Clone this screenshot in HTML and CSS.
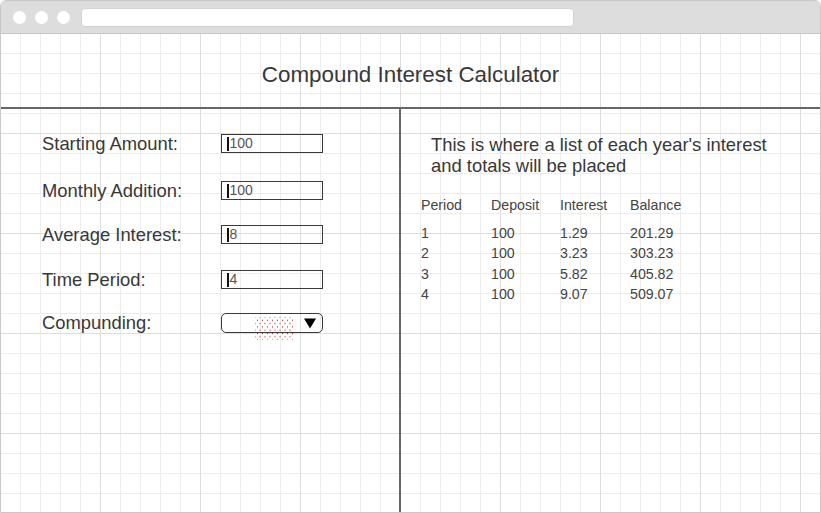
FILE: index.html
```html
<!DOCTYPE html>
<html>
<head>
<meta charset="utf-8">
<title>Compound Interest Calculator</title>
<link rel="stylesheet" href="styles.css">
</head>
<body>
<div class="window">
  <div class="chrome">
    <span class="dot"></span><span class="dot"></span><span class="dot"></span>
    <div class="address"></div>
  </div>
  <div class="canvas">
    <div class="title-bar"><h1 class="title">Compound Interest Calculator</h1></div>
    <div class="body">
      <div class="form">
        <div class="row"><span class="label">Starting Amount:</span><div class="field"><span class="caret"></span>100</div></div>
        <div class="row"><span class="label">Monthly Addition:</span><div class="field"><span class="caret"></span>100</div></div>
        <div class="row"><span class="label">Average Interest:</span><div class="field"><span class="caret"></span>8</div></div>
        <div class="row"><span class="label">Time Period:</span><div class="field"><span class="caret"></span>4</div></div>
        <div class="row"><span class="label">Compunding:</span><div class="select"><span class="dots"></span><svg class="arrow" width="12" height="11" viewBox="0 0 12 11"><polygon points="0,0.5 12,0.5 6,10.5" fill="#000"/></svg></div></div>
      </div>
      <div class="results">
        <p class="note">This is where a list of each year's interest and totals will be placed</p>
        <div class="table">
          <div class="thead"><span>Period</span><span>Deposit</span><span>Interest</span><span>Balance</span></div>
          <div class="tbody">
            <span>1</span><span>100</span><span>1.29</span><span>201.29</span>
            <span>2</span><span>100</span><span>3.23</span><span>303.23</span>
            <span>3</span><span>100</span><span>5.82</span><span>405.82</span>
            <span>4</span><span>100</span><span>9.07</span><span>509.07</span>
          </div>
        </div>
      </div>
    </div>
  </div>
</div>
</body>
</html>
```

FILE: styles.css
```css
html, body {
  margin: 0;
  padding: 0;
  background: #fff;
}
body {
  font-family: "Liberation Sans", Arial, sans-serif;
  color: #333;
}
.window {
  width: 821px;
  height: 513px;
  box-sizing: border-box;
  border: 1px solid #c8c8c8;
  border-radius: 6px 6px 0 0;
  overflow: hidden;
  display: flex;
  flex-direction: column;
}
.chrome {
  flex: none;
  background: #dddddd;
  border-bottom: 1px solid #c6c6c6;
  display: flex;
  align-items: center;
  padding: 1px 0 0 12px;
  box-sizing: border-box;
  height: 33px;
}
.dot {
  width: 13px;
  height: 13px;
  border-radius: 50%;
  background: #fff;
  margin-right: 9px;
  flex: none;
}
.address {
  margin-left: 2px;
  width: 493px;
  height: 19px;
  background: #fff;
  border-radius: 4px;
  border: 1px solid #d2d2d2;
  box-sizing: border-box;
}
.canvas {
  flex: 1;
  background-color: #fff;
  background-image:
    linear-gradient(to right, #dedede 1px, transparent 1px),
    linear-gradient(to bottom, #dedede 1px, transparent 1px),
    linear-gradient(to right, #ececec 1px, transparent 1px),
    linear-gradient(to bottom, #ececec 1px, transparent 1px);
  background-size: 100px 100px, 100px 100px, 20px 20px, 20px 20px;
  background-position: 99px 0, 0 99px, 19px 0, 0 19px;
  display: flex;
  flex-direction: column;
}
.title-bar {
  height: 73px;
  border-bottom: 2px solid #666;
  display: flex;
  justify-content: center;
  flex: none;
}
.title {
  margin: 28px 0 0;
  font-size: 22.4px;
  line-height: 26px;
  font-weight: normal;
  color: #383838;
}
.body {
  flex: 1;
  display: flex;
}
.form {
  border-right: 2px solid #666;
  padding: 25px 0 0 41px;
  width: 357px;
  display: flex;
  flex-direction: column;
}
.row {
  display: flex;
  align-items: center;
  height: 19px;
}
.row:nth-child(2) { margin-top: 28px; }
.row:nth-child(3) { margin-top: 25px; }
.row:nth-child(4) { margin-top: 26px; }
.row:nth-child(5) { margin-top: 24px; height: 20px; }
.label {
  width: 179px;
  font-size: 18.4px;
  color: #383838;
  white-space: nowrap;
}
.row:nth-child(1) .label,
.row:nth-child(2) .label { position: relative; top: 0.5px; }
.field {
  width: 102px;
  height: 19px;
  box-sizing: border-box;
  border: 1px solid #3a3a3a;
  font-size: 14px;
  line-height: 17px;
  color: #555;
  padding-left: 5px;
  display: flex;
  align-items: center;
}
.caret {
  display: inline-block;
  width: 1.5px;
  height: 14px;
  background: #111;
  margin-right: 1px;
}
.select {
  position: relative;
  width: 102px;
  height: 20px;
  box-sizing: border-box;
  border: 1px solid #3a3a3a;
  border-radius: 5px;
  display: flex;
  align-items: center;
  justify-content: flex-end;
  padding-right: 6px;
}
.arrow {
  display: block;
}
.dots {
  position: absolute;
  left: 33px;
  top: 3px;
  width: 39px;
  height: 23px;
  background-image:
    radial-gradient(circle, rgba(200, 30, 30, 0.9) 0.7px, transparent 1px),
    radial-gradient(circle, rgba(200, 30, 30, 0.9) 0.7px, transparent 1px);
  background-size: 5px 6.6px;
  background-position: 0 0, 2.5px 3.3px;
}
.results {
  flex: 1;
  padding: 25px 0 0 20px;
}
.note {
  margin: 0 0 0 10px;
  width: 360px;
  font-size: 18.4px;
  line-height: 21px;
  color: #383838;
}
.table {
  margin-top: 19px;
  font-size: 14.2px;
  color: #444;
}
.thead, .tbody {
  display: grid;
  grid-template-columns: 70px 69px 70px 70px;
  line-height: 20px;
}
.tbody {
  margin-top: 8px;
  line-height: 20.3px;
}
```
